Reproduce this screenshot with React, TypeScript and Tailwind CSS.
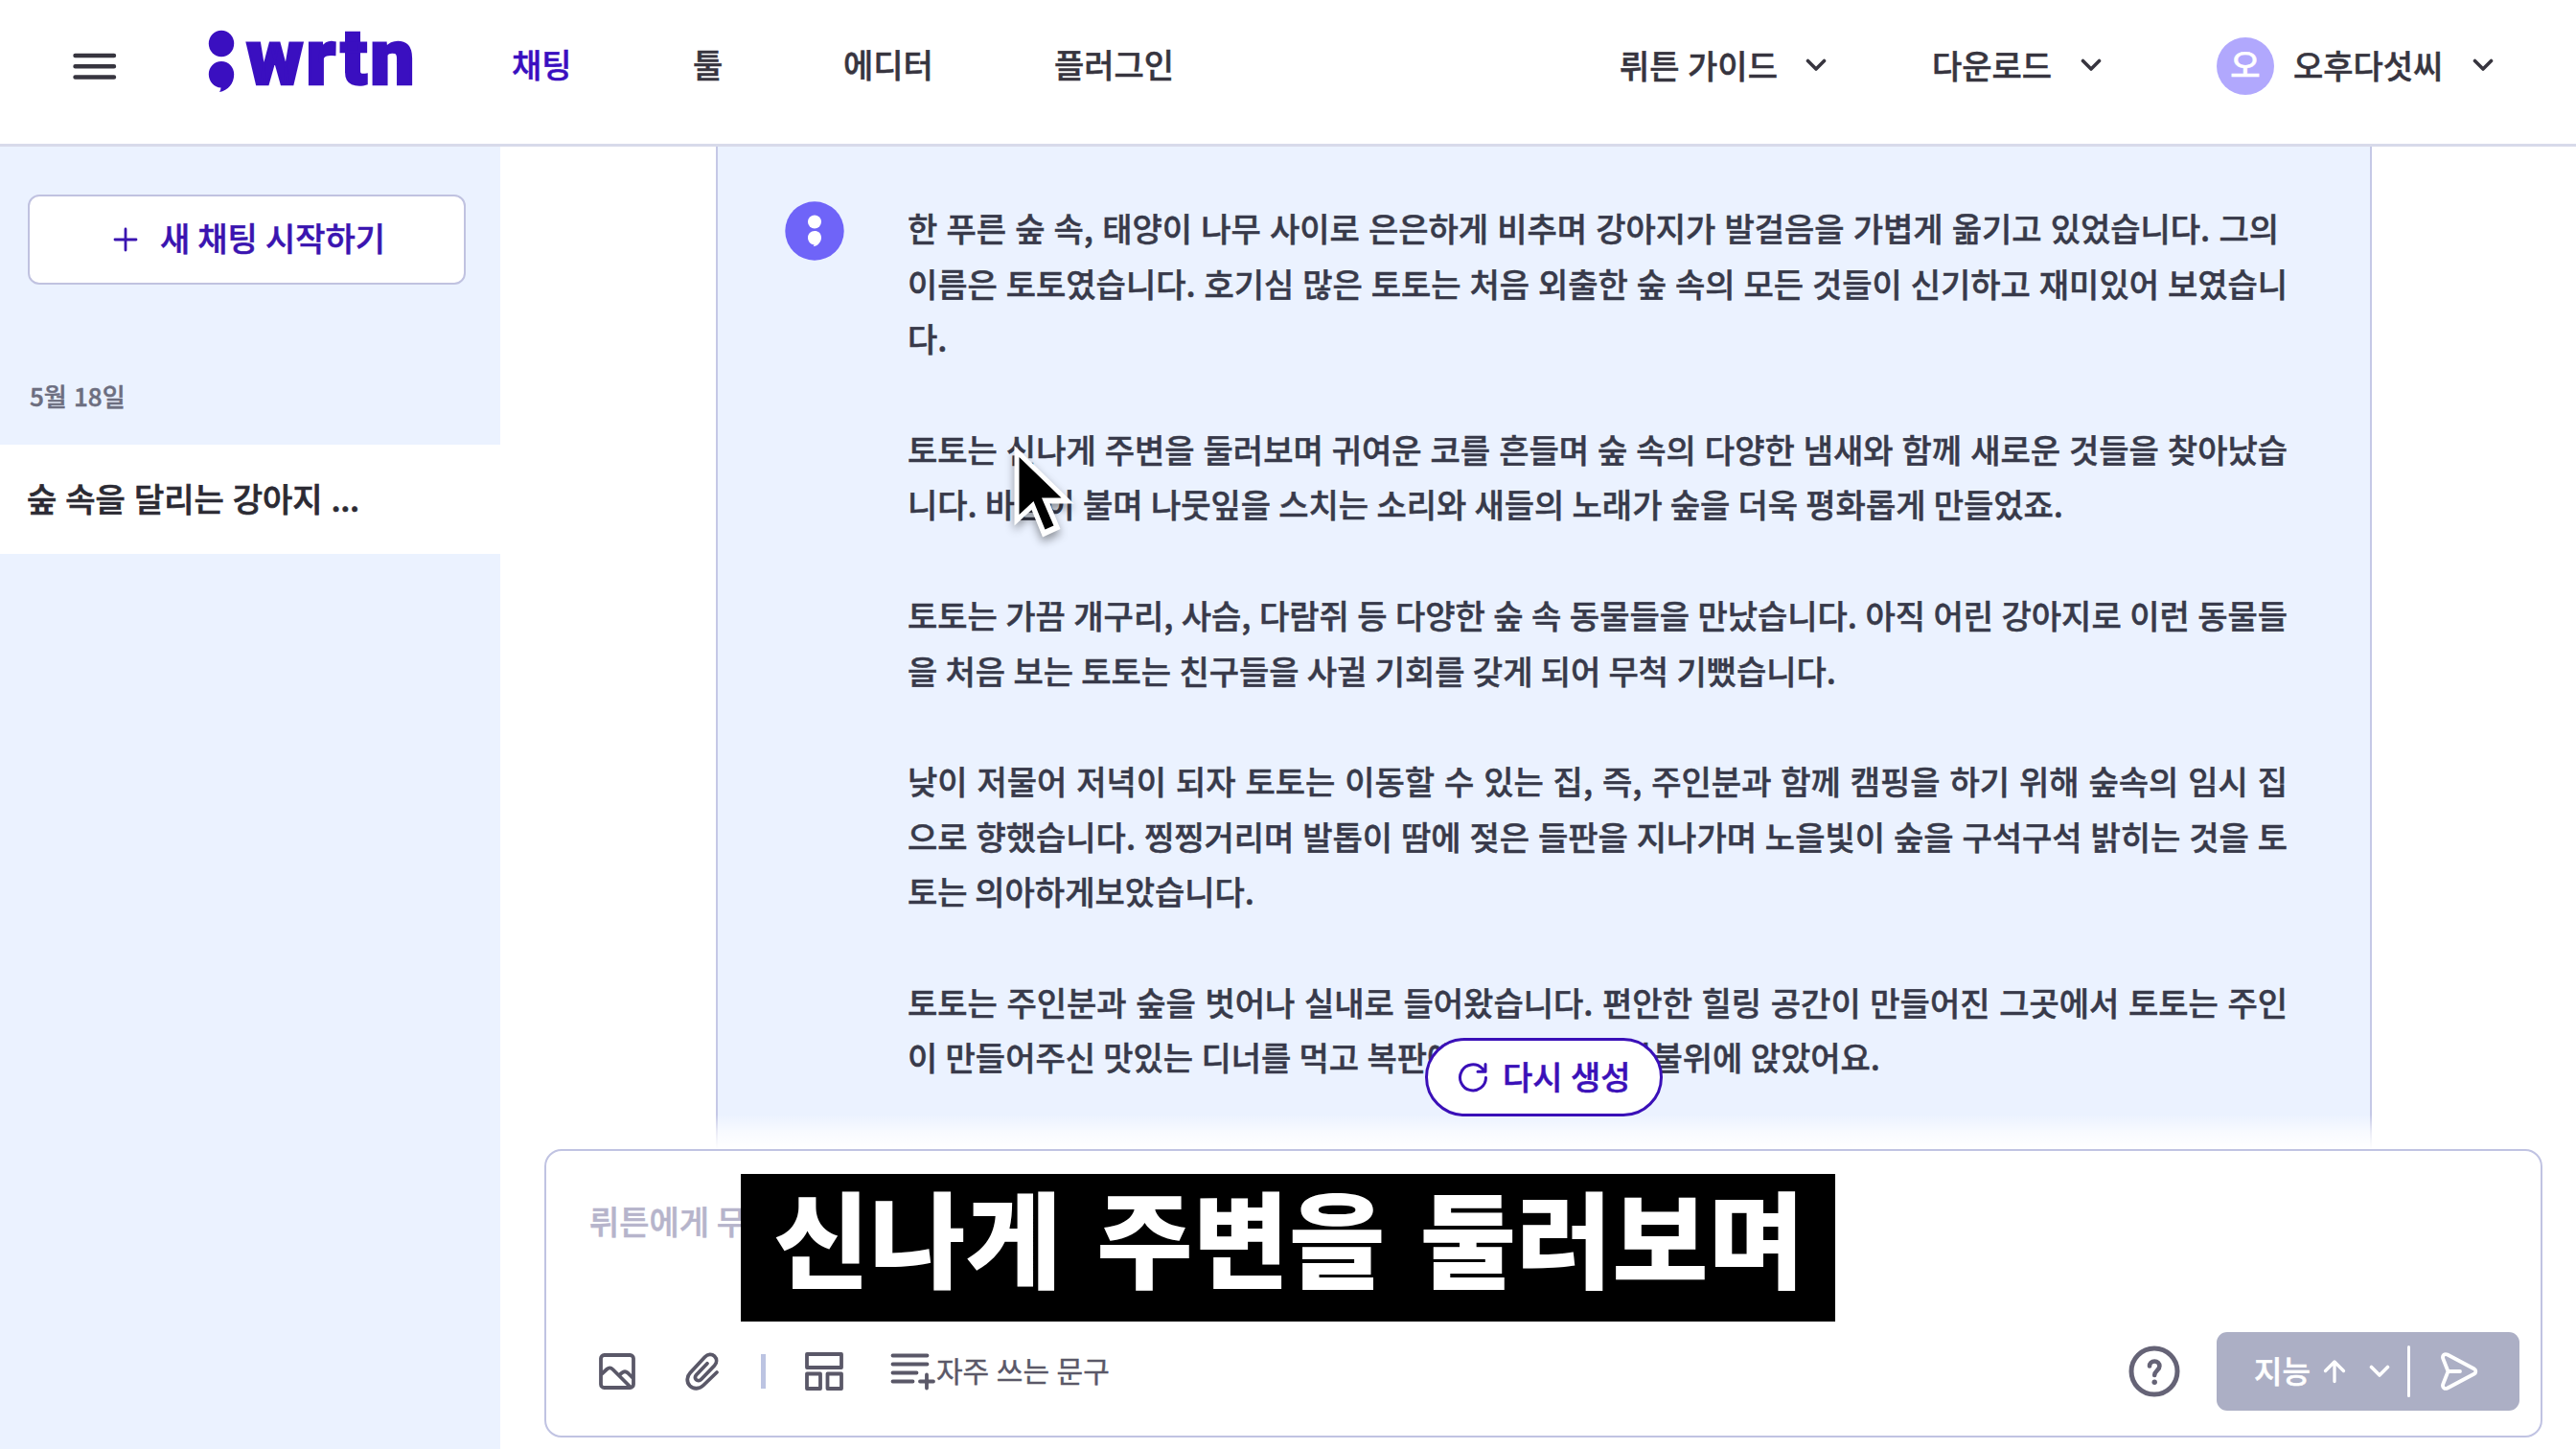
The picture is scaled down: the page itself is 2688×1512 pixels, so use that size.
import React from "react";

const FONT = "font-['Noto_Sans_CJK_KR','Noto_Sans',sans-serif]";

// Each line of the story with its measure in pixels; blank lines separate paragraphs.
const story: [string, number][] = [
  ["한 푸른 숲 속, 태양이 나무 사이로 은은하게 비추며 강아지가 발걸음을 가볍게 옮기고 있었습니다. 그의", 1431],
  ["이름은 토토였습니다. 호기심 많은 토토는 처음 외출한 숲 속의 모든 것들이 신기하고 재미있어 보였습니", 1440],
  ["다.", 0],
  ["", 0],
  ["토토는 신나게 주변을 둘러보며 귀여운 코를 흔들며 숲 속의 다양한 냄새와 함께 새로운 것들을 찾아났습", 1440],
  ["니다. 바람이 불며 나뭇잎을 스치는 소리와 새들의 노래가 숲을 더욱 평화롭게 만들었죠.", 1206],
  ["", 0],
  ["토토는 가끔 개구리, 사슴, 다람쥐 등 다양한 숲 속 동물들을 만났습니다. 아직 어린 강아지로 이런 동물들", 1440],
  ["을 처음 보는 토토는 친구들을 사귈 기회를 갖게 되어 무척 기뻤습니다.", 969],
  ["", 0],
  ["낮이 저물어 저녁이 되자 토토는 이동할 수 있는 집, 즉, 주인분과 함께 캠핑을 하기 위해 숲속의 임시 집", 1440],
  ["으로 향했습니다. 찡찡거리며 발톱이 땀에 젖은 들판을 지나가며 노을빛이 숲을 구석구석 밝히는 것을 토", 1440],
  ["토는 의아하게보았습니다.", 362],
  ["", 0],
  ["토토는 주인분과 숲을 벗어나 실내로 들어왔습니다. 편안한 힐링 공간이 만들어진 그곳에서 토토는 주인", 1440],
  ["이 만들어주신 맛있는 디너를 먹고 복판에 피어있는 모닥불위에 앉았어요.", 1015],
];

function Chevron({ className = "" }: { className?: string }) {
  return (
    <svg className={className} width="22" height="14" viewBox="0 0 22 14" fill="none" stroke="currentColor" strokeWidth="3.6" strokeLinecap="round" strokeLinejoin="round">
      <path d="M2.5 2.5 11 11l8.500-8.500" />
    </svg>
  );
}

function Header() {
  return (
    <header className="flex h-[153px] shrink-0 border-b-[3px] border-[#d8daea] bg-white text-[34px] font-medium text-[#37353f] [-webkit-text-stroke:0.5px_currentColor]">
      <div className="flex h-[137px] w-full items-center">
        <svg className="ml-[76px] shrink-0" width="46" height="28" viewBox="0 0 46 28" stroke="#37353f" strokeWidth="4.400" strokeLinecap="round">
          <path d="M2.500 3h40.500M2.500 14.300h40.500M2.500 25.500h40.500" />
        </svg>
        <div className="ml-[95px] flex w-[317px] shrink-0 items-center text-[#3a0fc0]">
          <svg className="mt-[-9px] shrink-0" width="28" height="66" viewBox="0 0 28 66" fill="currentColor">
            <ellipse cx="14" cy="14.500" rx="13.200" ry="13.700" />
            <path d="M14 33C6.500 33 .8 39 .8 46.500S6.500 60.500 13.500 60.500C13.500 62 13 63.500 12 65 21 63.500 27.200 56 27.200 46.500 27.200 39 21.500 33 14 33Z" />
          </svg>
          <span className="mt-[-18px] ml-[12px] font-['Roboto'] text-[82px] leading-[90px] font-black tracking-[2.800px] [-webkit-text-stroke:2.500px_currentColor]">wrtn</span>
        </div>
        <nav className="flex w-[1156px] shrink-0 pb-[4px]">
          <span className="w-[189px] text-[#3a0fc0]">채팅</span>
          <span className="w-[157px]">툴</span>
          <span className="w-[220px]">에디터</span>
          <span>플러그인</span>
        </nav>
        <div className="flex items-center">
          <span className="mt-[-3px] w-[194px] shrink-0 [word-spacing:-1px]">뤼튼 가이드</span>
          <Chevron className="mt-[-2px]" />
          <span className="mt-[-3px] ml-[110px] w-[155px] shrink-0">다운로드</span>
          <Chevron className="mt-[-2px]" />
          <span className="ml-[120px] flex size-[60px] shrink-0 items-center justify-center rounded-full bg-[#b1a8fd] pb-[3px] text-[34px] leading-none text-white">
            오
          </span>
          <span className="mt-[-3px] ml-[20px] w-[187px] shrink-0">오후다섯씨</span>
          <Chevron className="mt-[-2px]" />
        </div>
      </div>
    </header>
  );
}

function Sidebar() {
  return (
    <aside className="flex w-[522px] shrink-0 flex-col bg-[#ebf2ff]">
      <button className="mt-[50px] ml-[29px] flex h-[94px] w-[457px] items-center rounded-[12px] border-2 border-[#c0c2e0] bg-white pl-[87px] text-[34px] font-medium text-[#3a14b0]">
        <svg width="26" height="26" viewBox="0 0 26 26" stroke="currentColor" strokeWidth="2.800" strokeLinecap="round">
          <path d="M13 2v22M2 13h22" />
        </svg>
        <span className="mt-[-5px] ml-[23px] [word-spacing:-1.500px] [-webkit-text-stroke:0.5px_currentColor]">새 채팅 시작하기</span>
      </button>
      <div className="mt-[92px] flex h-[46px] items-center pl-[31px] text-[26px] font-medium text-[#6c6e80] [-webkit-text-stroke:0.5px_currentColor]">
        5월 18일
      </div>
      <div className="mt-[29px] flex h-[114px] items-center bg-white pb-[4px] pl-[28px] text-[34px] font-medium text-[#2b2a33] [word-spacing:-0.500px] [-webkit-text-stroke:0.7px_currentColor]">
        숲 속을 달리는 강아지&nbsp;<span className="tracking-[-0.500px]">...</span>
      </div>
    </aside>
  );
}

function Story() {
  return (
    <section className="relative ml-[225px] flex h-[1046px] w-[1728px] overflow-hidden border-x-2 border-[#c5c8e6] bg-[#ebf2ff]">
      <svg className="mt-[57px] ml-[70px] shrink-0" width="62" height="62" viewBox="0 0 62 62">
        <circle cx="31" cy="31" r="30.700" fill="#6f64f8" />
        <ellipse cx="31" cy="21.500" rx="7" ry="7" fill="#fff" />
        <path d="M31 31c-4 0-7 3-7 7s3 7.300 6.500 7.300c0 .8-.2 1.400-.8 2C34.500 46.500 38 42.500 38 38s-3-7-7-7Z" fill="#fff" />
      </svg>
      <div className="mt-[56px] ml-[66px] text-[34px] leading-[57.700px] font-medium text-[#383a4a] [word-spacing:-3.500px] [-webkit-text-stroke:0.5px_currentColor]">
        {story.map(([line, width], i) => (
          <p key={i} className="h-[57.700px] [text-align-last:justify]" style={{ width: width || undefined, textAlignLast: width ? undefined : "left" }}>
            {line}
          </p>
        ))}
      </div>
    </section>
  );
}

function Composer() {
  return (
    <div className="ml-[46px] flex h-[301px] w-[2085px] flex-col rounded-[18px] border-2 border-[#c0c3e2] bg-white">
      <div className="flex h-[148px] items-center pb-[4px] pl-[45px] text-[34px] font-medium text-[#b6b4cb] [-webkit-text-stroke:0.5px_currentColor]">
        <span className="w-[160px] overflow-hidden whitespace-nowrap [word-spacing:-2px]">뤼튼에게 무</span>
      </div>
      <div className="mt-[41px] flex h-[82px] items-center pr-[22px] pl-[55px] text-[#5a5868]">
        <svg width="38" height="38" viewBox="0 0 38 38" fill="none" stroke="currentColor" strokeWidth="3.800" strokeLinejoin="round">
          <rect x="2" y="2" width="34" height="34" rx="3.500" />
          <path d="M2.500 22 8.500 16.500Q11.500 14 14.500 17L33 35.500M21 23l3-2.500Q27 18 30 20.500L35.500 26" />
        </svg>
        <svg className="ml-[52px]" width="36" height="40" viewBox="0 0 36 40" fill="none" stroke="currentColor" strokeWidth="3.800" strokeLinecap="round" strokeLinejoin="round">
          <path d="M33 21 19 34.500C15 38.500 8.500 39 4.800 35 1.200 31 1.500 25.500 5.200 21.500L20.500 5C23.500 1.800 27.800 1.600 30.500 4.200 33.200 6.800 33.300 11 30.500 14L16.500 28.500C15 30 12.800 30 11.400 28.700 10 27.300 10.100 25.200 11.500 23.700L23 11.800" />
        </svg>
        <span className="ml-[43px] h-[36px] w-[5px] bg-[#bcc4e2]" />
        <svg className="ml-[41px]" width="40" height="40" viewBox="0 0 40 40" fill="none" stroke="currentColor" strokeWidth="3.800" strokeLinejoin="round">
          <rect x="2" y="2" width="36" height="14" />
          <rect x="2" y="22.500" width="14" height="15.500" />
          <rect x="23.500" y="22.500" width="14.500" height="15.500" />
        </svg>
        <svg className="ml-[49px]" width="48" height="40" viewBox="0 0 48 40" fill="none" stroke="currentColor" strokeWidth="3.800" strokeLinecap="round">
          <path d="M2.500 3.500h36M2.500 12.500h36M2.500 21.500h25M2.500 30.500h21M31 30.500h14M38 23.500v14" />
        </svg>
        <span className="mt-[-4px] text-[30px] [word-spacing:-0.800px] [-webkit-text-stroke:0.4px_currentColor]">자주 쓰는 문구</span>
        <span className="grow" />
        <svg width="54" height="54" viewBox="0 0 54 54" fill="none" stroke="#656376" strokeLinecap="round" strokeLinejoin="round">
          <circle cx="27" cy="27" r="24" strokeWidth="5" />
          <path d="M22 21.500c0-3 2.200-5 5.200-5s5.200 2 5.200 5c0 4.500-5.200 4.800-5.200 9.500" strokeWidth="4.600" />
          <circle cx="27.200" cy="38.200" r="2.700" fill="#656376" stroke="none" />
        </svg>
        <div className="ml-[38px] flex h-[82px] w-[316px] items-center rounded-[11px] bg-[#acafc5] pl-[39px] text-white">
          <span className="mt-[-5px] w-[72px] text-[32px] font-medium [-webkit-text-stroke:0.5px_currentColor]">지능</span>
          <svg width="24" height="26" viewBox="0 0 24 26" fill="none" stroke="currentColor" strokeWidth="3.300" strokeLinecap="round" strokeLinejoin="round">
            <path d="M12 23.500V3M2.500 12.500 12 3l9.500 9.500" />
          </svg>
          <Chevron className="ml-[24px]" />
          <span className="ml-[18px] h-[54px] w-[3px] rounded-full bg-white" />
          <svg className="ml-[31px]" width="40" height="40" viewBox="0 0 40 40" fill="none" stroke="currentColor" strokeWidth="3.800" strokeLinecap="round" strokeLinejoin="round">
            <path d="M8.500 20 3.200 6.500C2.200 3.300 5 1.200 7.800 2.500L35.500 17.200C38 18.600 38 21.400 35.500 22.800L7.800 37.500C5 38.800 2.200 36.700 3.200 33.500L8.500 20H21" />
          </svg>
        </div>
      </div>
    </div>
  );
}

export default function App() {
  return (
    <div lang="ko" className={`relative flex h-[1512px] w-[2688px] flex-col overflow-hidden bg-white ${FONT}`}>
      <Header />
      <div className="flex h-[1359px]">
        <Sidebar />
        <main className="relative flex grow flex-col">
          <Story />
          <Composer />
          <div className="absolute top-[1010px] left-0 h-[36px] w-full bg-linear-to-b from-white/0 via-white/65 to-white" />
          <button className="absolute top-[930px] left-[965px] flex h-[82px] w-[248px] items-center rounded-full border-[3px] border-[#3a10b8] bg-white pl-[31px] text-[34px] font-medium text-[#3a10b8]">
            <svg width="32" height="34" viewBox="0 0 32 34" fill="none" stroke="currentColor" strokeWidth="3" strokeLinecap="round" strokeLinejoin="round">
              <path d="M29.500 17.500A13.500 13.500 0 1 1 25.500 7.800L28.500 11M29 3.500V11.300H21" />
            </svg>
            <span className="mt-[-4px] ml-[15px] [word-spacing:-1px] [-webkit-text-stroke:0.5px_currentColor]">다시 생성</span>
          </button>
        </main>
      </div>
      <svg className="absolute top-[456px] left-[1048px] drop-shadow-[0_5px_5px_rgba(0,0,0,0.4)]" width="84" height="116" viewBox="1048 456 84 116">
        <path d="M1058.500 465v83.500l18-16.500 11.500 28.500 18.500-8.500-11-26.500h25Z" fill="#fff" />
        <path d="M1063.500 477v60l15-14 12 29.500 9-4-12.500-29h20.500Z" fill="#000" />
      </svg>
      <div className="absolute top-[1225px] left-[773px] flex h-[154px] w-[1142px] items-center bg-black pb-[27px] pl-[34px] text-[109px] leading-none font-black whitespace-nowrap text-white [word-spacing:6px]">
        신나게 주변을 둘러보며
      </div>
    </div>
  );
}
